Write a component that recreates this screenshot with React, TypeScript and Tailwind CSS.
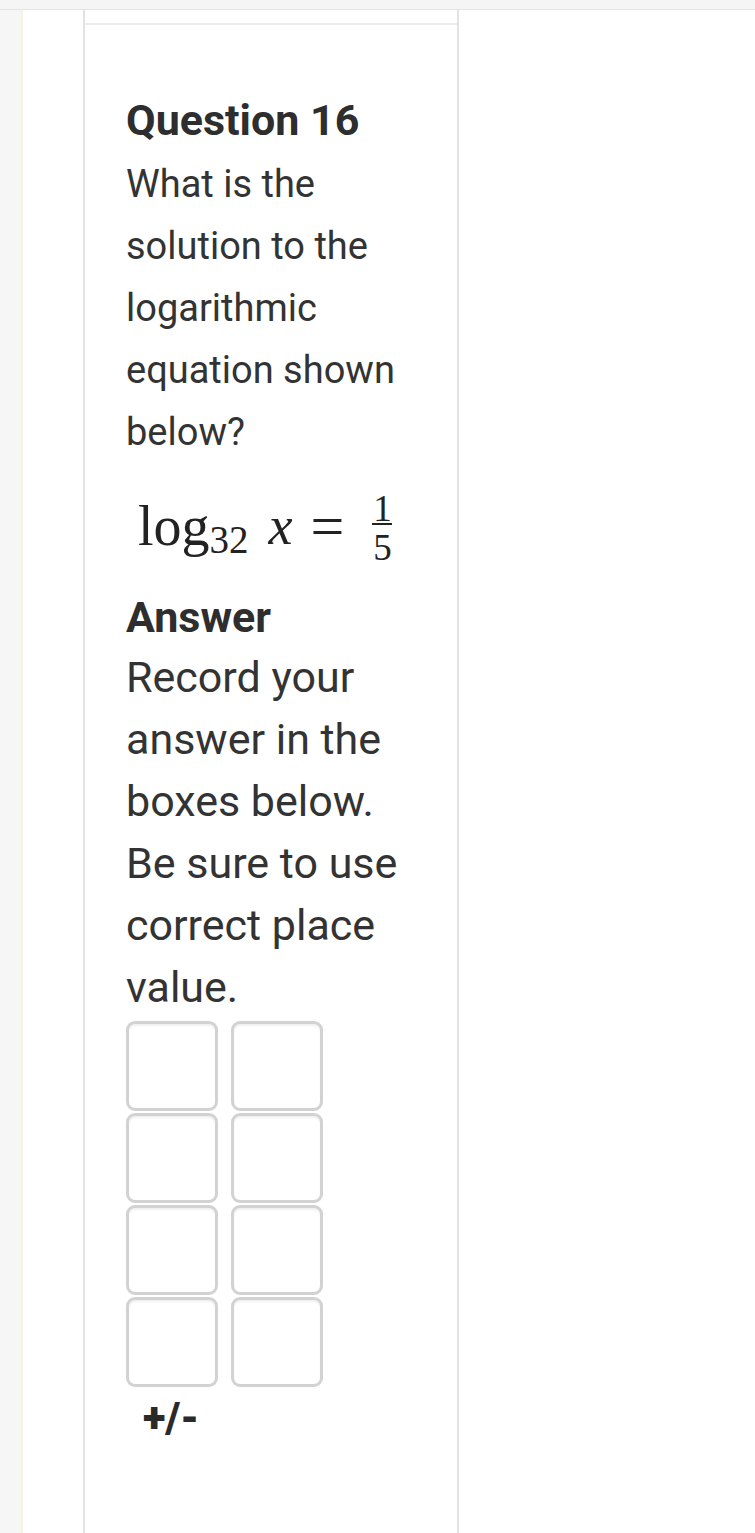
import React from "react";

const Box = () => (
  <div className="h-[90px] w-[92px] rounded-[9px] border-[3px] border-[#d2d2d2] bg-white shadow-[inset_0_2px_2px_rgba(0,0,0,0.06)]" />
);

export default function App() {
  return (
    <div className="flex min-h-[1533px] w-[755px] flex-col bg-white text-[#333333]" style={{ fontFamily: "Roboto, 'Liberation Sans', sans-serif" }}>
      <div className="h-[10px] border-b border-[#e4e4e4] bg-[#f5f5f5]" />
      <div className="flex flex-1">
        <div className="w-[21px] bg-[#f6f6f6]" />
        <div className="w-[2px] bg-[#fbf3e2]" />
        <div className="w-[60px] bg-white" />
        <div className="flex w-[376px] flex-col border-x-2 border-[#e2e2e2]">
          <div className="h-[15px] border-b-2 border-[#ececec]" />
          <div className="flex flex-col pl-[41px] pt-[64px]">
            <div className="text-[43px] font-bold leading-[62px] text-[#2e2e2e]">Question 16</div>
            <div className="mt-[2px] text-[38px] leading-[62px]">
              <div>What is the</div>
              <div>solution to the</div>
              <div>logarithmic</div>
              <div>equation shown</div>
              <div>below?</div>
            </div>
            <div className="flex h-[125px] items-center pl-[12px] text-[#222]" style={{ fontFamily: "'Liberation Serif', serif" }}>
              <span className="text-[56px] leading-none">log</span>
              <span className="relative top-[14px] text-[39px] leading-none">32</span>
              <span className="ml-[20px] text-[54px] italic leading-none">x</span>
              <span className="ml-[18px] text-[60px] leading-none">=</span>
              <span className="ml-[28px] flex flex-col items-center text-[37px] leading-none">
                <span className="block h-[30px]">1</span>
                <span className="mb-[4px] mt-[3px] block h-[2px] w-[20px] bg-[#222]" />
                <span className="block h-[32px]">5</span>
              </span>
            </div>
            <div className="text-[43px] font-bold leading-[58px] text-[#2e2e2e]">Answer</div>
            <div className="text-[43px] leading-[62px]">
              <div>Record your</div>
              <div>answer in the</div>
              <div>boxes below.</div>
              <div>Be sure to use</div>
              <div>correct place</div>
              <div>value.</div>
            </div>
            <div className="mt-[3px] grid w-[197px] grid-cols-2 gap-x-[13px] gap-y-[2px]">
              <Box /><Box />
              <Box /><Box />
              <Box /><Box />
              <Box /><Box />
            </div>
            <div className="ml-[17px] mt-[8px] text-[42px] font-black leading-[46px] text-[#2a2a2a]">+/-</div>
          </div>
        </div>
        <div className="flex-1 bg-white" />
      </div>
    </div>
  );
}
